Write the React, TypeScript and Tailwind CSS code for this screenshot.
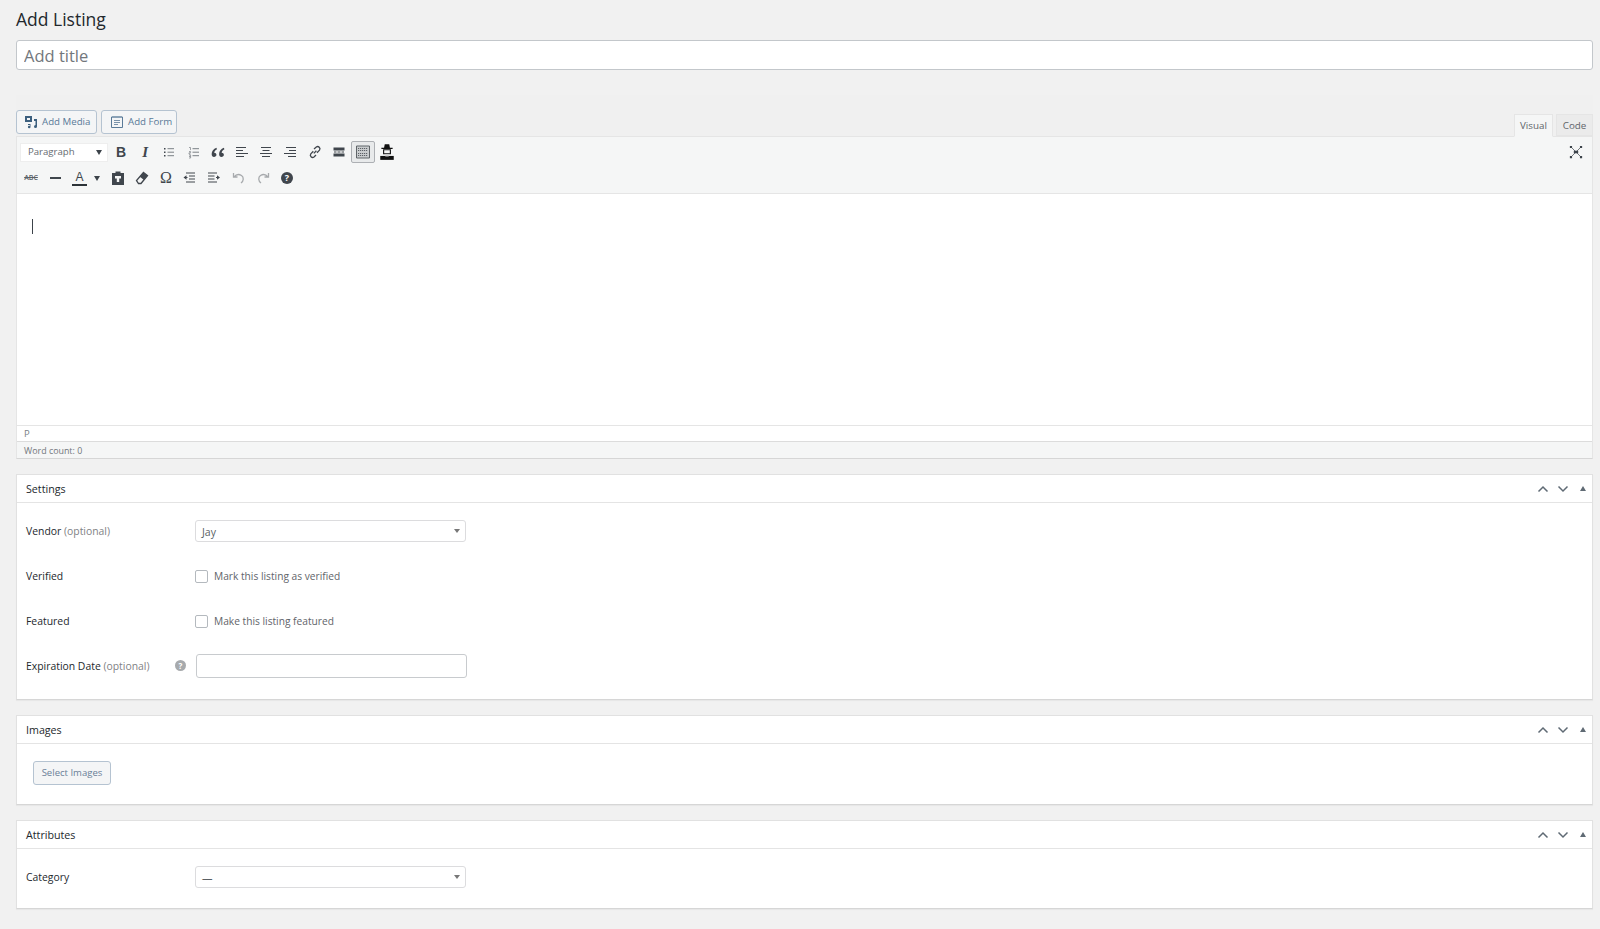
import {ReactNode} from "react";

const darkIcon = "#40464d";

function Svg({children, size = 16, className = ""}: {children: ReactNode; size?: number; className?: string}) {
    return (
        <svg width={size} height={size} viewBox="0 0 16 16" className={className} fill="none">
            {children}
        </svg>
    );
}

function Lines({rows, x = 2, stroke = darkIcon}: {rows: number[][]; x?: number; stroke?: string}) {
    return (
        <>
            {rows.map((r, i) => (
                <path key={i} d={`M${r[0] + x} ${r[2]}H${r[1] + x}`} stroke={stroke} strokeWidth="1"/>
            ))}
        </>
    );
}

function ToolButton({children, active = false, w = "w-[24.2px]"}: {children: ReactNode; active?: boolean; w?: string}) {
    return (
        <div className={`${w} h-[22px] flex items-center justify-center ${active ? "border border-[#adb0b4] bg-[#e8eaeb] rounded-[2px]" : ""}`}>
            {children}
        </div>
    );
}

function Toolbar() {
    return (
        <div className="bg-[#f5f6f6] border-b border-[#e5e5e5] h-[57px] pl-[3px] pt-[4px] relative">
            <div className="flex items-center h-[22px]">
                <div className="w-[88px] h-[19px] bg-white border border-[#eeeeee] flex items-center justify-between pl-[7px] pr-[5px] mr-[1px]">
                    <span className="text-[9.6px] text-[#666c72]">Paragraph</span>
                    <span className="w-0 h-0 border-x-[3.5px] border-x-transparent border-t-[5px] border-t-[#3c434a]"/>
                </div>
                <ToolButton>
                    <span className="font-['Liberation_Sans'] font-bold text-[14px] text-[#40464d]">B</span>
                </ToolButton>
                <ToolButton>
                    <span className="font-['Liberation_Serif'] font-bold italic text-[15px] text-[#40464d]">I</span>
                </ToolButton>
                <ToolButton>
                    <Svg>
                        <path d="M3 4h1.5v1.5H3zM3 7.5h1.5V9H3zM3 11h1.5v1.5H3z" fill={darkIcon}/>
                        <path d="M6.5 4.7H13M6.5 8.2H13M6.5 11.7H13" stroke="#7b8085"/>
                    </Svg>
                </ToolButton>
                <ToolButton>
                    <Svg>
                        <path d="M3 3.5h1.5v2.6M3 7.5h1.6v1.3H3v1.3h1.6M3 11h1.6v3H3M3 12.5h1.5" stroke="#7b8085" strokeWidth="0.7"/>
                        <path d="M6.5 4.7H13M6.5 8.2H13M6.5 11.7H13" stroke="#7b8085"/>
                    </Svg>
                </ToolButton>
                <ToolButton>
                    <Svg size={17}>
                        <path d="M7 3.500C4.300 4.700 2.500 6.600 2.500 9.300c0 1.800.9 2.900 2.200 2.900S7 11.300 7 10.100 6.100 8.200 4.900 8.200c.2-1.400 1-2.500 2.600-3.300zM14 3.500c-2.700 1.200-4.500 3.100-4.500 5.800 0 1.800.9 2.900 2.200 2.900S14 11.300 14 10.100 13.100 8.200 11.900 8.200c.2-1.400 1-2.500 2.600-3.300z" fill={darkIcon}/>
                    </Svg>
                </ToolButton>
                <ToolButton>
                    <Svg><Lines rows={[[0, 10, 3.500], [0, 7, 6.500], [0, 12, 9.500], [0, 8, 12.500]]}/></Svg>
                </ToolButton>
                <ToolButton>
                    <Svg><Lines rows={[[1, 11, 3.500], [2.500, 9.500, 6.500], [0, 12, 9.500], [2, 10, 12.500]]}/></Svg>
                </ToolButton>
                <ToolButton>
                    <Svg><Lines rows={[[2, 12, 3.500], [5, 12, 6.500], [0, 12, 9.500], [4, 12, 12.500]]}/></Svg>
                </ToolButton>
                <ToolButton>
                    <Svg>
                        <path d="M6.800 9.400 9.400 6.800M6.300 7.300 3.800 9.800a2.300 2.300 0 0 0 3.200 3.200L9 11M7 5 9.300 3a2.300 2.300 0 0 1 3.200 3.200L10 8.700" stroke={darkIcon} strokeWidth="1.300"/>
                    </Svg>
                </ToolButton>
                <ToolButton>
                    <Svg>
                        <path d="M2.500 3.500h11v3h-11zM2.500 9.500h11v3h-11z" fill={darkIcon}/>
                        <path d="M3 8h2.500M6.500 8h3M10.500 8H13" stroke={darkIcon}/>
                    </Svg>
                </ToolButton>
                <ToolButton active>
                    <Svg>
                        <path d="M1.500 2h13v12h-13z" fill="#c9ccce" stroke="#5f6468"/>
                        <path d="M3 4.500h10M3 6.500h10M3 9.500h10M3 11.500h10" stroke="#4f555a" strokeWidth="0.900" strokeDasharray="1.200 0.800"/>
                    </Svg>
                </ToolButton>
                <ToolButton>
                    <Svg size={18}>
                        <path d="M6 1h4l.6 3.200H13v1.100H3V4.200h2.400z" fill="#111"/>
                        <path d="M5 6h6v3.500H5z" stroke="#111"/>
                        <path d="M2 11.500h12V15H2z" fill="#111"/>
                        <path d="M6.500 10h3v2h-3z" fill="#ccc"/>
                    </Svg>
                </ToolButton>
            </div>
            <div className="flex items-center h-[22px] mt-[4px] -ml-[1px]">
                <ToolButton w="w-[24px]">
                    <span className="text-[7px] font-semibold text-[#5b6167] line-through">ABC</span>
                </ToolButton>
                <ToolButton w="w-[25px]">
                    <div className="w-[11px] h-[2px] bg-[#40464d]"/>
                </ToolButton>
                <ToolButton w="w-[23px]">
                    <div className="flex flex-col items-center leading-none">
                        <span className="font-['Liberation_Sans'] text-[12px] leading-[13px] text-[#40464d]">A</span>
                        <div className="w-[15px] h-[2px] bg-[#2c3338]"/>
                    </div>
                </ToolButton>
                <div className="w-[15px] h-[22px] flex items-center">
                    <span className="w-0 h-0 ml-[3px] border-x-[3.5px] border-x-transparent border-t-[5px] border-t-[#3c434a]"/>
                </div>
                <ToolButton w="w-[24px]">
                    <Svg>
                        <path d="M2 3h3.500V1.500h5V3H14v12H2z" fill={darkIcon}/>
                        <path d="M5 6h6v2.500H9.200V12H6.800V8.500H5z" fill="#f5f6f6"/>
                    </Svg>
                </ToolButton>
                <ToolButton w="w-[24px]">
                    <Svg>
                        <path d="M9.500 2.500 13.500 5.500 7 13.500H4.500L2.500 10.500z" stroke={darkIcon} strokeWidth="1.300"/>
                        <path d="M9.500 2.500 13.500 5.500 10 10 5.800 6.800z" fill={darkIcon}/>
                    </Svg>
                </ToolButton>
                <ToolButton w="w-[24px]">
                    <span className="font-['Liberation_Serif'] text-[16px] text-[#40464d]">Ω</span>
                </ToolButton>
                <ToolButton w="w-[24px]">
                    <Svg>
                        <path d="M4 3h9M7 6h6M7 9h6M4 12h9" stroke={darkIcon}/>
                        <path d="M1.500 7.500 4.500 5.300V7h1v1h-1v1.700z" fill={darkIcon}/>
                    </Svg>
                </ToolButton>
                <ToolButton w="w-[24.500px]">
                    <Svg>
                        <path d="M2 3h9M2 6h6.500M2 9h6.500M2 12h9" stroke={darkIcon}/>
                        <path d="M14 7.500 11 5.300V7h-1v1h1v1.700z" fill={darkIcon}/>
                    </Svg>
                </ToolButton>
                <ToolButton w="w-[24.500px]">
                    <Svg>
                        <path d="M2.500 3v4h4M3 7c2-2.500 5-3 7.500-1.500 2.500 1.800 2.300 5.500-.5 7.500" stroke="#a7aaad" strokeWidth="1.300"/>
                    </Svg>
                </ToolButton>
                <ToolButton w="w-[24px]">
                    <Svg>
                        <path d="M13.500 3v4h-4M13 7c-2-2.500-5-3-7.500-1.500-2.500 1.800-2.300 5.500.5 7.500" stroke="#a7aaad" strokeWidth="1.300"/>
                    </Svg>
                </ToolButton>
                <ToolButton w="w-[24px]">
                    <div className="w-[12px] h-[12px] rounded-full bg-[#40464d] flex items-center justify-center text-[9px] font-bold text-white">?</div>
                </ToolButton>
            </div>
            <div className="absolute right-[9px] top-[8px]">
                <Svg size={14}>
                    <path d="M5.500 6.500h5v3h-5z" fill="#3c434a"/>
                    <path d="M2 2 14 14M14 2 2 14" stroke="#3c434a" strokeWidth="0.800"/>
                    <path d="M1 1h2.500v2.500H1zM12.500 1H15v2.500h-2.500zM1 12.500h2.500V15H1zM12.500 12.500H15V15h-2.500z" fill="#3c434a"/>
                </Svg>
            </div>
        </div>
    );
}

function MediaButton({icon, label, className}: {icon: ReactNode; label: string; className: string}) {
    return (
        <div className={`h-[24px] flex items-center border border-[#b5c3d1] rounded-[3px] bg-[#f4f5f6] text-[9.7px] text-[#5a7a98] ${className}`}>
            {icon}
            <span className="pt-[1px]">{label}</span>
        </div>
    );
}

function PanelHeader({title}: {title: string}) {
    return (
        <div className="h-[28px] flex items-center justify-between border-b border-[#e4e4e4] pl-[9px]">
            <span className="text-[10.7px] text-[#23282d] pt-[2px]">{title}</span>
            <div className="flex items-center -mr-[1px]">
                <div className="w-[20px] flex justify-center">
                    <svg width="12" height="8" viewBox="0 0 12 8" fill="none"><path d="M1.500 6.500 6 2l4.500 4.500" stroke="#5f6a74" strokeWidth="1.500"/></svg>
                </div>
                <div className="w-[20px] flex justify-center">
                    <svg width="12" height="8" viewBox="0 0 12 8" fill="none"><path d="M1.500 1.500 6 6l4.500-4.500" stroke="#5f6a74" strokeWidth="1.500"/></svg>
                </div>
                <div className="w-[20px] flex justify-center">
                    <span className="w-0 h-0 border-x-[3.500px] border-x-transparent border-b-[5px] border-b-[#5f6a74]"/>
                </div>
            </div>
        </div>
    );
}

function Panel({title, className, children}: {title: string; className: string; children: ReactNode}) {
    return (
        <section className={`bg-white border border-[#e1e1e1] border-b-[#d6d6d6] shadow-[0_1px_1px_rgba(0,0,0,0.04)] ${className}`}>
            <PanelHeader title={title}/>
            {children}
        </section>
    );
}

function SelectBox({value}: {value: string}) {
    return (
        <div className="w-[271px] h-[22px] -ml-[1px] border border-[#dcdcde] rounded-[3px] bg-white flex items-center justify-between pl-[6px] pr-[5px]">
            <span className="text-[10.5px] text-[#5a5f64] pt-[4px]">{value}</span>
            <span className="w-0 h-0 border-x-[3px] border-x-transparent border-t-[4px] border-t-[#777]"/>
        </div>
    );
}

function FieldRow({label, optional, children}: {label: string; optional?: boolean; children: ReactNode}) {
    return (
        <div className="h-[45px] flex items-center pl-[9px]">
            <div className="w-[170px] shrink-0 pt-[2px] text-[10.4px] text-[#23282d]">
                {label}
                {optional && <span className="text-[#7f8285]"> (optional)</span>}
            </div>
            {children}
        </div>
    );
}

function CheckRow({label, text}: {label: string; text: string}) {
    return (
        <FieldRow label={label}>
            <div className="w-[13px] h-[13px] mt-[2px] -ml-[1px] border border-[#b4b9be] rounded-[2px] bg-white mr-[6px]"/>
            <span className="pt-[2px] text-[10.2px] text-[#5f646a]">{text}</span>
        </FieldRow>
    );
}

export default function App() {
    return (
        <div className="min-h-[929px] bg-[#f1f1f1] pl-[16px] pr-[7px] font-['Open_Sans',sans-serif]">
            <h1 className="text-[17.500px] leading-[24px] pt-[7px] text-[#23282d]">Add Listing</h1>
            <input
                placeholder="Add title"
                className="block w-full h-[30px] mt-[9px] px-[7px] bg-white border border-[#c3c7cb] rounded-[3px] text-[16.500px] placeholder:text-[#72777c] outline-none"
            />
            <div className="mt-[25px] pt-[15px] bg-[#f0f0f0]">
                <div className="flex justify-between items-end h-[26px]">
                    <div className="flex gap-[4px] pb-[2px]">
                        <MediaButton
                            className="w-[81px] pl-[7px]"
                            label="Add Media"
                            icon={
                                <svg width="14" height="14" viewBox="0 0 14 14" className="mr-[4px]">
                                    <path d="M1 1h7v6H1z" fill="#3c5f7e"/>
                                    <path d="M3 3h3v2H3z" fill="#f4f5f6"/>
                                    <path d="M10 4h3v7.500a1.500 1.500 0 1 1-1.500-1.500V6H10zM4 9h2.500v3a1.300 1.300 0 1 1-1.300-1.300H6V10H4z" fill="#3c5f7e"/>
                                </svg>
                            }
                        />
                        <MediaButton
                            className="w-[76px] pl-[8px]"
                            label="Add Form"
                            icon={
                                <svg width="14" height="14" viewBox="0 0 14 14" className="mr-[4px]" fill="none">
                                    <path d="M1.500 2h11v10.500h-11z" stroke="#5a7a98"/>
                                    <path d="M3 1v2M5 1v2M7 1v2M9 1v2M11 1v2" stroke="#5a7a98" strokeWidth="0.700"/>
                                    <path d="M4 5.500h6M4 7.500h6M4 9.500h4" stroke="#5a7a98" strokeWidth="0.800"/>
                                </svg>
                            }
                        />
                    </div>
                    <div className="flex items-end gap-[3px] text-[9.800px]">
                        <div className="h-[23px] w-[39px] flex items-center justify-center pt-[1px] bg-[#f5f6f6] border border-[#e5e5e5] border-b-[#f5f6f6] -mb-[1px] relative text-[#5f646a]">Visual</div>
                        <div className="h-[22px] w-[37px] flex items-center justify-center pt-[2px] bg-[#ebebeb] border border-[#e5e5e5] text-[#5f646a]">Code</div>
                    </div>
                </div>
                <div className="bg-white border border-[#e5e5e5] border-b-[#d6d6d6]">
                    <Toolbar/>
                    <div className="h-[231px] pl-[15px] pt-[25px]">
                        <div className="w-[1px] h-[15px] bg-[#3c434a]"/>
                    </div>
                    <div className="h-[16px] border-t border-[#e5e5e5] pl-[7px] text-[9.500px] leading-[15px] text-[#7a7f84]">P</div>
                    <div className="h-[17px] border-t border-[#dcdcdc] bg-[#f5f6f6] pl-[7px] pt-[1px] text-[8.900px] leading-[16px] text-[#72777c]">Word count: 0</div>
                </div>
            </div>
            <Panel title="Settings" className="mt-[15px] h-[226px]">
                <div className="pt-[5px]">
                    <FieldRow label="Vendor" optional>
                        <SelectBox value="Jay"/>
                    </FieldRow>
                    <CheckRow label="Verified" text="Mark this listing as verified"/>
                    <CheckRow label="Featured" text="Make this listing featured"/>
                    <div className="relative">
                        <FieldRow label="Expiration Date" optional>
                            <div className="w-[271px] h-[24px] border border-[#c8cbce] rounded-[3px] bg-white"/>
                        </FieldRow>
                        <div className="absolute left-[158px] top-[17px] w-[11px] h-[11px] rounded-full bg-[#a7aaad] text-white text-[8px] font-bold leading-[11px] text-center">?</div>
                    </div>
                </div>
            </Panel>
            <Panel title="Images" className="mt-[15px] h-[90px]">
                <div className="pt-[17px] pl-[16px]">
                    <div className="w-[78px] h-[24px] flex items-center justify-center pt-[1px] border border-[#b5c3d1] rounded-[3px] bg-[#f4f5f6] text-[9.550px] text-[#6a8098]">
                        Select Images
                    </div>
                </div>
            </Panel>
            <Panel title="Attributes" className="mt-[15px] h-[89px]">
                <div className="pt-[5px]">
                    <FieldRow label="Category">
                        <SelectBox value="—"/>
                    </FieldRow>
                </div>
            </Panel>
        </div>
    );
}
